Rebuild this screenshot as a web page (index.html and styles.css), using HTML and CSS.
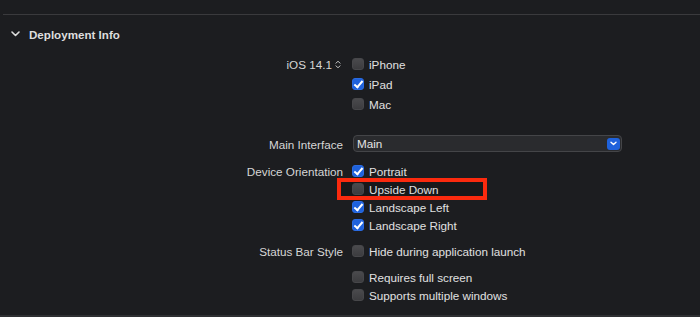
FILE: index.html
```html
<!DOCTYPE html>
<html lang="en">
<head>
    <meta charset="UTF-8">
    <title>Deployment Info</title>
    <link rel="stylesheet" href="styles.css">
</head>
<body>

    <div class="rule rule-top"></div>

    <!-- Rubrik f칬r sektionen -->
    <div class="section-header">
        <svg class="disclosure" width="9" height="6" viewBox="0 0 9 6">
            <path d="M1 1 L4.5 4.5 L8 1" fill="none" stroke="#dcdcdc" stroke-width="1.6" stroke-linecap="round" stroke-linejoin="round"/>
        </svg>
        <span class="section-title">Deployment Info</span>
    </div>

    <div class="field field-devices">
        <div class="field-label">
            iOS 14.1
            <svg class="stepper" width="6" height="9" viewBox="0 0 6 9">
                <path d="M1 3.2 L3 1.2 L5 3.2 M1 5.8 L3 7.8 L5 5.8" fill="none" stroke="#cfcfcf" stroke-width="1" stroke-linecap="round" stroke-linejoin="round"/>
            </svg>
        </div>
        <div class="field-controls rows-20">
            <label class="check"><span class="box"></span>iPhone</label>
            <label class="check"><span class="box checked"></span>iPad</label>
            <label class="check"><span class="box"></span>Mac</label>
        </div>
    </div>

    <div class="field field-interface">
        <div class="field-label">Main Interface</div>
        <div class="field-controls">
            <div class="popup">
                <span class="popup-value">Main</span>
                <span class="popup-button">
                    <svg width="7" height="5" viewBox="0 0 7 5">
                        <path d="M1 1.2 L3.5 3.6 L6 1.2" fill="none" stroke="#fff" stroke-width="1.4" stroke-linecap="round" stroke-linejoin="round"/>
                    </svg>
                </span>
            </div>
        </div>
    </div>

    <div class="field field-orientation">
        <div class="field-label">Device Orientation</div>
        <div class="field-controls rows-18">
            <label class="check"><span class="box checked"></span>Portrait</label>
            <label class="check highlight"><span class="box"></span>Upside Down</label>
            <label class="check"><span class="box checked"></span>Landscape Left</label>
            <label class="check"><span class="box checked"></span>Landscape Right</label>
        </div>
    </div>

    <div class="field field-statusbar">
        <div class="field-label">Status Bar Style</div>
        <div class="field-controls rows-18">
            <label class="check"><span class="box"></span>Hide during application launch</label>
        </div>
    </div>

    <div class="field field-screen">
        <div class="field-label"></div>
        <div class="field-controls rows-18">
            <label class="check"><span class="box"></span>Requires full screen</label>
            <label class="check"><span class="box"></span>Supports multiple windows</label>
        </div>
    </div>

    <div class="rule rule-bottom"></div>

</body>
</html>
```

FILE: styles.css
```css
body {
    margin: 0;
    background-color: #1c1d20;
    color: #dcdcdc;
    font-family: 'Liberation Sans', Arial, sans-serif;
    font-size: 11.7px;
    height: 317px;
    overflow: hidden;
}

.rule {
    height: 1px;
    background-color: #3a3a3d;
}

.rule-top {
    margin-top: 14px;
    margin-left: 3px;
}

.rule-bottom {
    margin-top: 11px;
    height: 2px;
    background-color: #2e2f32;
}

.section-header {
    display: flex;
    align-items: center;
    height: 20px;
    margin-top: 9px;
    padding-left: 11px;
}

.disclosure {
    margin-right: 9px;
}

.section-title {
    font-weight: bold;
    font-size: 11.6px;
    color: #dedede;
}

/* Tv친 kolumner: etikett till h칬ger, kontroller till v칛nster */
.field {
    display: grid;
    grid-template-columns: 343px 1fr;
    column-gap: 9px;
}

.field-devices {
    margin-top: 10px;
}

.field-interface {
    margin-top: 21px;
}

.field-orientation {
    margin-top: 9px;
}

.field-statusbar {
    margin-top: 8px;
}

.field-screen {
    margin-top: 8px;
}

.field-label {
    display: flex;
    justify-content: flex-end;
    align-items: center;
    height: 18px;
    color: #d6d6d6;
    white-space: nowrap;
}

.field-devices .field-label {
    height: 20px;
}

.stepper {
    margin-left: 3px;
    margin-right: 2px;
}

.field-controls {
    display: flex;
    flex-direction: column;
}

.check {
    display: flex;
    align-items: center;
    height: 18px;
    color: #e0e0e0;
    white-space: nowrap;
}

.rows-20 .check {
    height: 20px;
}

.box {
    width: 12px;
    height: 12px;
    border-radius: 3px;
    margin-right: 5px;
    background: linear-gradient(#4a4a4d, #3c3c3f);
    box-sizing: border-box;
    border: 1px solid #47474a;
    position: relative;
}

.box.checked {
    background: #1f62dc;
    border-color: #2a6be2;
}

.box.checked::after {
    content: '';
    position: absolute;
    left: 3px;
    top: 0px;
    width: 3px;
    height: 7px;
    border-right: 2px solid #fff;
    border-bottom: 2px solid #fff;
    transform: rotate(40deg);
}

/* Markering runt "Upside Down" */
.highlight {
    position: relative;
}

.highlight::before {
    content: '';
    position: absolute;
    left: -15px;
    top: -2px;
    width: 150px;
    height: 22px;
    box-sizing: border-box;
    border: 4px solid #fb2a0e;
    background-color: #18181a;
    z-index: -1;
}

.popup {
    display: flex;
    align-items: center;
    justify-content: space-between;
    width: 269px;
    height: 17px;
    margin-left: 1px;
    box-sizing: border-box;
    background-color: #2a2b2e;
    border: 1px solid #444548;
    border-radius: 4px;
    padding: 0 1px 0 3px;
}

.popup-value {
    color: #e4e4e4;
}

.popup-button {
    display: flex;
    align-items: center;
    justify-content: center;
    width: 13px;
    height: 12px;
    border-radius: 3px;
    background-color: #1f62dc;
}
```
